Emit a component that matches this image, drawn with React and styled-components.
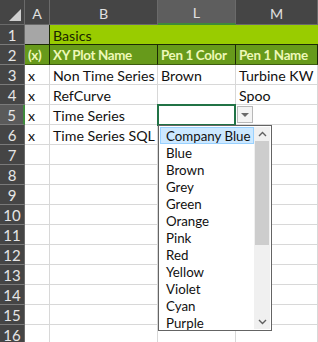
import React from 'react';
import styled, { createGlobalStyle } from 'styled-components';

const GlobalStyle = createGlobalStyle`
  body {
    margin: 0;
    overflow: hidden;
    background: #ffffff;
    font-family: Lato, "Open Sans", sans-serif;
  }
`;

const Sheet = styled.div`
  position: relative;
  display: grid;
  grid-template-columns: 25px 25px 108px 78px 82px;
  grid-template-rows: 25px repeat(16, 20px);
  width: 318px;
  height: 342px;
  overflow: hidden;
  font-size: 14.2px;
`;

const Corner = styled.div`
  background: #454545;
  border-right: 1px solid #6a6a6a;
  border-bottom: 1px solid #6a6a6a;
  position: relative;
  &::after {
    content: '';
    position: absolute;
    right: 3px;
    bottom: 3px;
    border-left: 12px solid transparent;
    border-bottom: 12px solid #cfcfcf;
  }
`;

const ColHead = styled.div`
  background: ${p => (p.$active ? '#5e5e5e' : '#454545')};
  color: #e0e0e0;
  border-right: 1px solid #6a6a6a;
  border-bottom: ${p => (p.$active ? '2px solid #3f8a3a' : '1px solid #6a6a6a')};
  display: flex;
  align-items: center;
  justify-content: center;
  padding-top: 2px;
`;

const RowHead = styled.div`
  background: ${p => (p.$active ? '#5a5a5a' : '#454545')};
  color: #e6e6e6;
  font-size: 15px;
  border-bottom: 1px solid #7a7a7a;
  border-right: ${p => (p.$active ? '2px solid #3f8a3a' : '1px solid #6a6a6a')};
  display: flex;
  align-items: center;
  justify-content: center;
  box-sizing: border-box;
  padding-top: 1px;
`;

const Cell = styled.div`
  box-sizing: border-box;
  border-right: 1px solid #d8d8d8;
  border-bottom: 1px solid #d8d8d8;
  padding: 1px 3px 0;
  display: flex;
  align-items: center;
  white-space: nowrap;
  overflow: hidden;
  color: #111;
`;

const TitleCell = styled(Cell)`
  background: #99cc00;
  border-right: none;
  border-bottom: 1px solid #1c2a05;
  color: #1a2600;
  grid-column: ${p => p.$span || 'auto'};
`;

const GreyCell = styled(Cell)`
  background: #a6a6a6;
  border-right: 1px solid #1c2a05;
  border-bottom: 1px solid #1c2a05;
`;

const HeadCell = styled(Cell)`
  background: #679a1b;
  color: #eef8b8;
  font-weight: 700;
  font-size: 13.4px;
  letter-spacing: -0.35px;
  border-right: 1px solid #1c2a05;
  border-bottom: 1px solid #3d5c0f;
`;

const Selected = styled.div`
  position: absolute;
  left: 157px;
  top: 104px;
  width: 79px;
  height: 22px;
  box-sizing: border-box;
  border: 2px solid #217346;
  pointer-events: none;
`;

const DropButton = styled.div`
  position: absolute;
  left: 237px;
  top: 106px;
  width: 16px;
  height: 17px;
  box-sizing: border-box;
  border: 1px solid #b8b8b8;
  background: #f4f4f4;
  display: flex;
  align-items: center;
  justify-content: center;
  &::after {
    content: '';
    border-left: 4px solid transparent;
    border-right: 4px solid transparent;
    border-top: 4px solid #6a6a6a;
  }
`;

const List = styled.div`
  position: absolute;
  left: 158px;
  top: 125px;
  width: 114px;
  height: 206px;
  box-sizing: border-box;
  border: 1px solid #646464;
  background: #fff;
  display: flex;
  padding: 1px;
`;

const Items = styled.div`
  flex: 1;
  display: flex;
  flex-direction: column;
`;

const Item = styled.div`
  height: 17px;
  box-sizing: border-box;
  display: flex;
  align-items: center;
  padding-left: 5px;
  font-size: 13.3px;
  color: #111;
  background: ${p => (p.$hot ? '#cce8ff' : 'transparent')};
  border: 1px solid ${p => (p.$hot ? '#99d1ff' : 'transparent')};
`;

const Scroll = styled.div`
  width: 16px;
  display: flex;
  flex-direction: column;
  background: #f0f0f0;
`;

const Arrow = styled.div`
  height: 14px;
  display: flex;
  align-items: center;
  justify-content: center;
`;

const Thumb = styled.div`
  height: 104px;
  margin: 0 1px;
  background: #cdcdcd;
`;

const Track = styled.div`
  flex: 1;
`;

const rows = [
  ['x', 'Non Time Series', 'Brown', 'Turbine KW'],
  ['x', 'RefCurve', '', 'Spoo'],
  ['x', 'Time Series', '', ''],
  ['x', 'Time Series SQL', '', ''],
];

const colors = ['Company Blue', 'Blue', 'Brown', 'Grey', 'Green', 'Orange', 'Pink', 'Red', 'Yellow', 'Violet', 'Cyan', 'Purple'];

const Chevron = ({ up }) => (
  <svg width="9" height="6" viewBox="0 0 9 6">
    <path d={up ? 'M1 5 L4.5 1.5 L8 5' : 'M1 1 L4.5 4.5 L8 1'} fill="none" stroke="#606060" strokeWidth="1.4" />
  </svg>
);

export default function App() {
  const empty = [];
  for (let r = 7; r <= 16; r++) empty.push(r);

  return (
    <Sheet>
      <GlobalStyle />
      <Corner />
      <ColHead>A</ColHead>
      <ColHead>B</ColHead>
      <ColHead $active>L</ColHead>
      <ColHead>M</ColHead>

      <RowHead>1</RowHead>
      <GreyCell />
      <TitleCell $span="span 3">Basics</TitleCell>

      <RowHead>2</RowHead>
      <HeadCell>(x)</HeadCell>
      <HeadCell>XY Plot Name</HeadCell>
      <HeadCell>Pen 1 Color</HeadCell>
      <HeadCell>Pen 1 Name</HeadCell>

      {rows.map((row, i) => (
        <React.Fragment key={i}>
          <RowHead $active={i === 2}>{i + 3}</RowHead>
          {row.map((v, j) => <Cell key={j}>{v}</Cell>)}
        </React.Fragment>
      ))}

      {empty.map(r => (
        <React.Fragment key={r}>
          <RowHead>{r}</RowHead>
          <Cell />
          <Cell />
          <Cell />
          <Cell />
        </React.Fragment>
      ))}

      <Selected />
      <DropButton />
      <List>
        <Items>
          {colors.map((c, i) => <Item key={c} $hot={i === 0}>{c}</Item>)}
        </Items>
        <Scroll>
          <Arrow><Chevron up /></Arrow>
          <Thumb />
          <Track />
          <Arrow><Chevron /></Arrow>
        </Scroll>
      </List>
    </Sheet>
  );
}
